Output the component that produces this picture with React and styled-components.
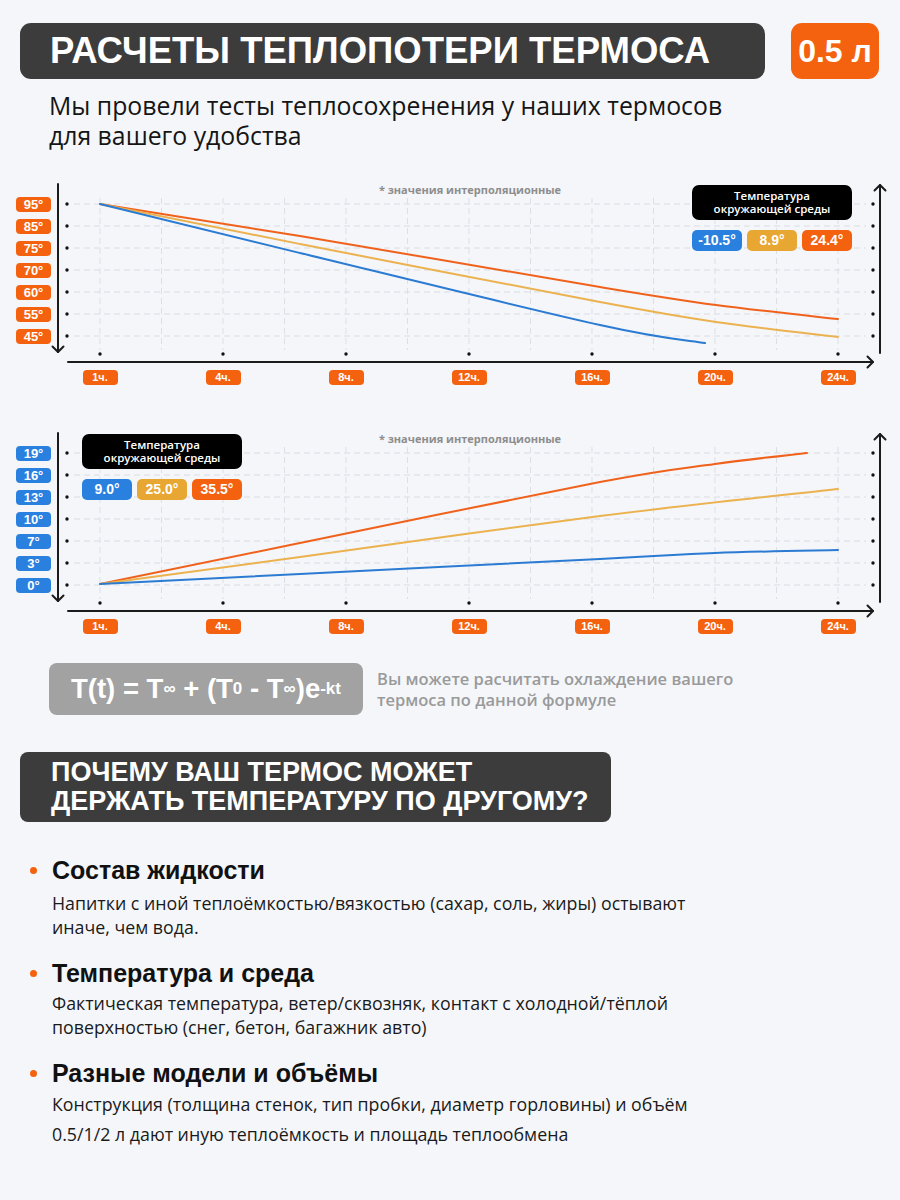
import React from 'react';
import styled, { createGlobalStyle } from 'styled-components';

const Global = createGlobalStyle`
  html, body { margin: 0; padding: 0; background: #f4f6fa; }
  body { font-family: "Open Sans", "Noto Sans", sans-serif; }
`;

const C = {
  orange: '#f5620f',
  yellow: '#e8a632',
  blue: '#2a80df',
  lineOrange: '#f0621c',
  lineYellow: '#ebb24f',
  lineBlue: '#2b7bd3',
  dark: '#3c3c3c',
};

const Page = styled.div`
  width: 900px;
  height: 1200px;
  box-sizing: border-box;
  padding-top: 23px;
  background: #f4f6fa;
  overflow: hidden;
`;

const HeaderRow = styled.div`
  display: flex;
  gap: 26px;
  height: 56px;
  padding-left: 20px;
`;

const TitleBar = styled.h1`
  margin: 0;
  width: 745px;
  box-sizing: border-box;
  padding-left: 30px;
  display: flex;
  align-items: center;
  background: ${C.dark};
  border-radius: 11px;
  color: #fff;
  font: 700 36.5px "Liberation Sans", Arial, sans-serif;
`;

const Badge = styled.div`
  width: 88px;
  display: flex;
  align-items: center;
  justify-content: center;
  background: ${C.orange};
  border-radius: 11px;
  color: #fff;
  font: 700 32px "Liberation Sans", Arial, sans-serif;
`;

const Subtitle = styled.p`
  margin: 11px 0 0 49px;
  color: #151515;
  font: 400 24.8px/30px "Open Sans", sans-serif;
`;

const SubLine = styled.span`
  display: block;
`;

const ChartBlock = styled.div`
  position: relative;
  height: 210px;
  margin-top: ${(p) => p.$mt}px;
`;

const Plot = styled.svg`
  position: absolute;
  left: 0;
  top: 0;
  width: 900px;
  height: 210px;
`;

const YLabels = styled.div`
  position: relative;
  display: flex;
  flex-direction: column;
  gap: 7px;
  width: 35px;
  padding: 16.5px 0 0 16px;
`;

const Pill = styled.div`
  width: ${(p) => p.$w || 35}px;
  height: 15px;
  border-radius: 4px;
  background: ${(p) => p.$c};
  color: #fff;
  text-align: center;
  font: 700 ${(p) => p.$fs || 13}px/15px "Liberation Sans", Arial, sans-serif;
`;

const XLabels = styled.div`
  position: relative;
  display: flex;
  margin-top: 26.5px;
  padding-left: 38.5px;
`;

const XCell = styled.div`
  width: 123px;
  display: flex;
  justify-content: center;
`;

const Note = styled.div`
  position: absolute;
  top: 2px;
  left: 340px;
  width: 260px;
  text-align: center;
  color: #8d8d8d;
  font: 700 11px/16px "Open Sans", sans-serif;
`;

const Legend = styled.div`
  position: absolute;
  top: 5px;
  left: ${(p) => p.$x}px;
  width: 160px;
`;

const LegendTitle = styled.div`
  height: 35px;
  box-sizing: border-box;
  padding-top: 4px;
  border-radius: 7px;
  background: #000;
  color: #fff;
  text-align: center;
  font: 600 11.5px/13px "Open Sans", sans-serif;
`;

const Chips = styled.div`
  display: flex;
  gap: 5px;
  margin-top: 10px;
`;

const Chip = styled.div`
  flex: 1;
  height: 21px;
  border-radius: 5px;
  background: ${(p) => p.$c};
  color: #fff;
  text-align: center;
  font: 700 14px/21px "Liberation Sans", Arial, sans-serif;
`;

const FormulaRow = styled.div`
  display: flex;
  align-items: center;
  gap: 14px;
  margin-top: 24px;
  padding-left: 49px;
`;

const FormulaBox = styled.div`
  width: 314px;
  height: 52px;
  flex-shrink: 0;
  display: flex;
  align-items: center;
  justify-content: center;
  border-radius: 8px;
  background: #a2a2a2;
  color: #fff;
  font: 700 27.5px "Liberation Sans", Arial, sans-serif;
  white-space: nowrap;
`;

const Small = styled.span`
  font-size: 0.62em;
`;

const Sup = styled.sup`
  font-size: 0.62em;
  line-height: 0;
  vertical-align: 0.7em;
`;

const Hint = styled.p`
  margin: 0;
  color: #9a9a9a;
  font: 600 16.5px/21px "Open Sans", sans-serif;
`;

const HintLine = styled.span`
  display: block;
`;

const SectionTitle = styled.h2`
  margin: 37px 0 0 20px;
  width: 591px;
  height: 70px;
  box-sizing: border-box;
  padding: 6px 0 0 31px;
  border-radius: 8px;
  background: ${C.dark};
  color: #fff;
  font: 700 27px/29px "Liberation Sans", Arial, sans-serif;
`;

const List = styled.div`
  display: flex;
  flex-direction: column;
  gap: 19px;
  margin-top: 33px;
`;

const Item = styled.div``;

const ItemTitle = styled.div`
  display: flex;
  align-items: center;
  height: 30px;
  color: #111;
  font: 700 25px/30px "Liberation Sans", Arial, sans-serif;
`;

const Dot = styled.span`
  width: 7px;
  height: 7px;
  margin: 0 15px 0 30px;
  border-radius: 50%;
  background: ${C.orange};
`;

const ItemText = styled.p`
  margin: ${(p) => p.$mt}px 0 0 52px;
  color: #1a1a1a;
  font: 400 17.8px/${(p) => p.$lh}px "Open Sans", sans-serif;
`;

function smooth(pts) {
  let d = `M${pts[0][0]},${pts[0][1]}`;
  for (let i = 0; i < pts.length - 1; i++) {
    const p0 = pts[i - 1] || pts[i];
    const p1 = pts[i];
    const p2 = pts[i + 1];
    const p3 = pts[i + 2] || p2;
    const c1x = p1[0] + (p2[0] - p0[0]) / 6;
    const c1y = p1[1] + (p2[1] - p0[1]) / 6;
    const c2x = p2[0] - (p3[0] - p1[0]) / 6;
    const c2y = p2[1] - (p3[1] - p1[1]) / 6;
    d += ` C${c1x},${c1y} ${c2x},${c2y} ${p2[0]},${p2[1]}`;
  }
  return d;
}

const ROWS = [24, 46, 68, 90, 112, 134, 156];
const XT = [0, 1, 2, 3, 4, 5, 6].map((i) => 100 + 123 * i);
const XG = Array.from({ length: 13 }, (_, i) => 100 + 61.5 * i);
const HOURS = ['1ч.', '4ч.', '8ч.', '12ч.', '16ч.', '20ч.', '24ч.'];

function Chart({ mt, yLabels, yColor, lines, legendX, legendValues }) {
  return (
    <ChartBlock $mt={mt}>
      <Plot viewBox="0 0 900 210">
        {ROWS.map((y) => (
          <line key={'h' + y} x1="74" x2="866" y1={y} y2={y} stroke="#d9dce1" strokeWidth="1" strokeDasharray="6 4" />
        ))}
        {XG.map((x) => (
          <line key={'v' + x} x1={x} x2={x} y1="18" y2="170" stroke="#dcdfe3" strokeWidth="1" strokeDasharray="6 4" />
        ))}
        {lines.map((l, i) => (
          <path key={i} d={smooth(l.pts)} fill="none" stroke={l.c} strokeWidth="2" strokeLinecap="round" />
        ))}
        <g stroke="#1b1b1b" strokeWidth="2" fill="none" strokeLinecap="round" strokeLinejoin="round">
          <line x1="58" x2="58" y1="4" y2="172" />
          <path d="M52.5,166.5 L58,172 L63.5,166.5" />
          <line x1="880" x2="880" y1="5" y2="173" />
          <path d="M874.5,10.5 L880,5 L885.5,10.5" />
          <line x1="68" x2="873" y1="182" y2="182" />
          <path d="M867.5,176.5 L873,182 L867.5,187.5" />
        </g>
        <g fill="#111">
          {ROWS.map((y) => (
            <circle key={'l' + y} cx="67" cy={y} r="1.7" />
          ))}
          {ROWS.map((y) => (
            <circle key={'r' + y} cx="873" cy={y} r="1.7" />
          ))}
          {XT.map((x) => (
            <circle key={'b' + x} cx={x} cy="174" r="1.7" />
          ))}
        </g>
      </Plot>
      <Note>* значения интерполяционные</Note>
      <YLabels>
        {yLabels.map((t) => (
          <Pill key={t} $c={yColor}>{t}</Pill>
        ))}
      </YLabels>
      <XLabels>
        {HOURS.map((h) => (
          <XCell key={h}>
            <Pill $c={C.orange} $fs={11}>{h}</Pill>
          </XCell>
        ))}
      </XLabels>
      <Legend $x={legendX}>
        <LegendTitle>
          Температура
          <br />
          окружающей среды
        </LegendTitle>
        <Chips>
          <Chip $c={C.blue}>{legendValues[0]}</Chip>
          <Chip $c={C.yellow}>{legendValues[1]}</Chip>
          <Chip $c={C.orange}>{legendValues[2]}</Chip>
        </Chips>
      </Legend>
    </ChartBlock>
  );
}

const cooling = [
  { c: C.lineOrange, pts: [[100, 24], [300, 56], [600, 107], [716, 125], [838, 139]] },
  { c: C.lineYellow, pts: [[100, 24], [300, 64], [600, 122], [716, 142], [838, 157]] },
  { c: C.lineBlue, pts: [[100, 24], [300, 73], [600, 145], [705, 163]] },
];

const heating = [
  { c: C.lineOrange, pts: [[100, 155], [300, 114], [600, 53], [715, 35], [807, 24]] },
  { c: C.lineYellow, pts: [[100, 155], [300, 128], [600, 87], [838, 60]] },
  { c: C.lineBlue, pts: [[100, 155], [300, 145], [600, 130], [715, 124], [838, 121]] },
];

const reasons = [
  {
    title: 'Состав жидкости',
    text: ['Напитки с иной теплоёмкостью/вязкостью (сахар, соль, жиры) остывают', 'иначе, чем вода.'],
    lh: 24,
    mt: 6,
  },
  {
    title: 'Температура и среда',
    text: ['Фактическая температура, ветер/сквозняк, контакт с холодной/тёплой', 'поверхностью (снег, бетон, багажник авто)'],
    lh: 24,
    mt: 3,
  },
  {
    title: 'Разные модели и объёмы',
    text: ['Конструкция (толщина стенок, тип пробки, диаметр горловины) и объём', '0.5/1/2 л дают иную теплоёмкость и площадь теплообмена'],
    lh: 30,
    mt: 1,
  },
];

export default function App() {
  return (
    <>
      <Global />
      <Page>
        <HeaderRow>
          <TitleBar>РАСЧЕТЫ ТЕПЛОПОТЕРИ ТЕРМОСА</TitleBar>
          <Badge>0.5 л</Badge>
        </HeaderRow>
        <Subtitle>
          <SubLine>Мы провели тесты теплосохренения у наших термосов</SubLine>
          <SubLine>для вашего удобства</SubLine>
        </Subtitle>

        <Chart
          mt={30}
          yLabels={['95°', '85°', '75°', '70°', '60°', '55°', '45°']}
          yColor={C.orange}
          lines={cooling}
          legendX={692}
          legendValues={['-10.5°', '8.9°', '24.4°']}
        />
        <Chart
          mt={39}
          yLabels={['19°', '16°', '13°', '10°', '7°', '3°', '0°']}
          yColor={C.blue}
          lines={heating}
          legendX={82}
          legendValues={['9.0°', '25.0°', '35.5°']}
        />

        <FormulaRow>
          <FormulaBox>
            T(t) = T<Small>∞</Small>&nbsp;+ (T<Small>0</Small>&nbsp;- T<Small>∞</Small>)e<Sup>-kt</Sup>
          </FormulaBox>
          <Hint>
            <HintLine>Вы можете расчитать охлаждение вашего</HintLine>
            <HintLine>термоса по данной формуле</HintLine>
          </Hint>
        </FormulaRow>

        <SectionTitle>
          ПОЧЕМУ ВАШ ТЕРМОС МОЖЕТ
          <br />
          ДЕРЖАТЬ ТЕМПЕРАТУРУ ПО ДРУГОМУ?
        </SectionTitle>

        <List>
          {reasons.map((r) => (
            <Item key={r.title}>
              <ItemTitle>
                <Dot />
                {r.title}
              </ItemTitle>
              <ItemText $lh={r.lh} $mt={r.mt}>
                {r.text[0]}
                <br />
                {r.text[1]}
              </ItemText>
            </Item>
          ))}
        </List>
      </Page>
    </>
  );
}
